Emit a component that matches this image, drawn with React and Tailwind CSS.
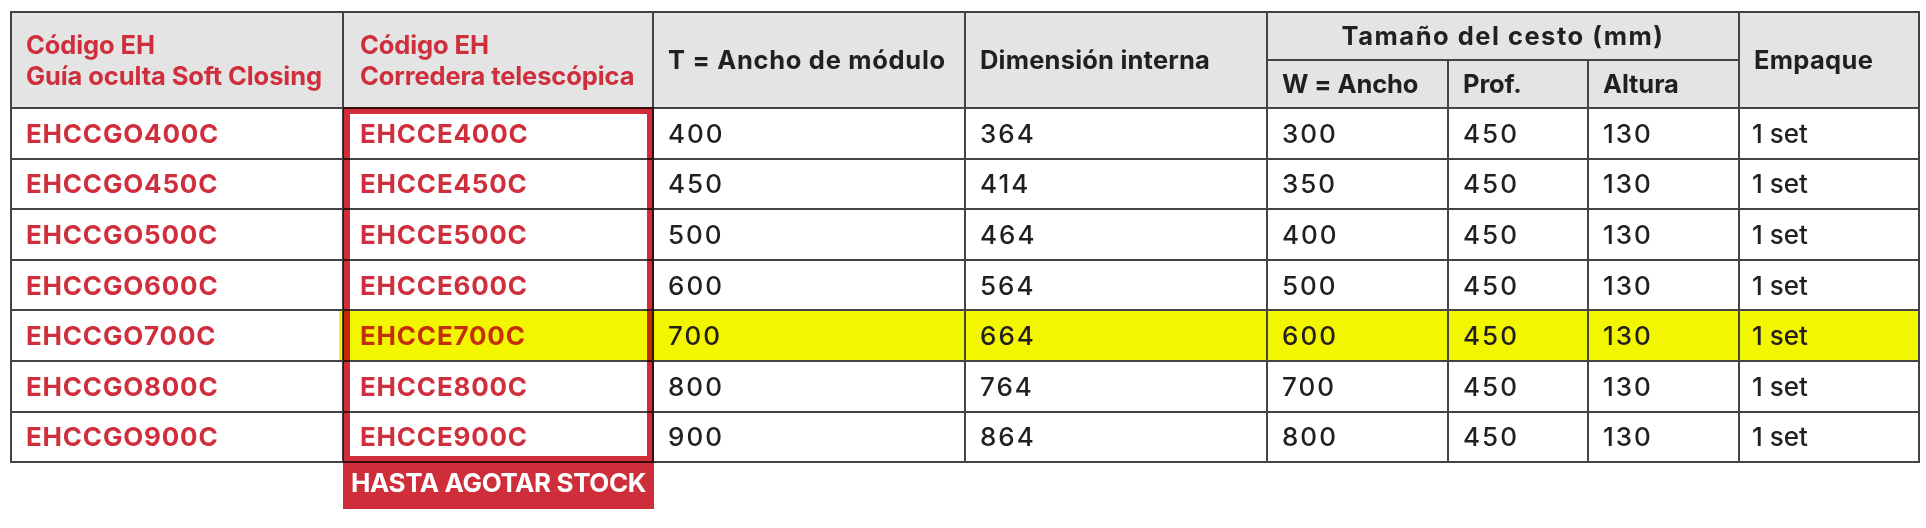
import React from "react";

const rows = [
  ["EHCCGO400C", "EHCCE400C", "400", "364", "300", "450", "130", "1 set"],
  ["EHCCGO450C", "EHCCE450C", "450", "414", "350", "450", "130", "1 set"],
  ["EHCCGO500C", "EHCCE500C", "500", "464", "400", "450", "130", "1 set"],
  ["EHCCGO600C", "EHCCE600C", "600", "564", "500", "450", "130", "1 set"],
  ["EHCCGO700C", "EHCCE700C", "700", "664", "600", "450", "130", "1 set"],
  ["EHCCGO800C", "EHCCE800C", "800", "764", "700", "450", "130", "1 set"],
  ["EHCCGO900C", "EHCCE900C", "900", "864", "800", "450", "130", "1 set"],
];

const cell = "border-2 border-[#444] px-[14px] align-middle";

const App = () => {
  return (
    <div className="min-h-screen bg-white font-['Inter',sans-serif] text-[#231f20]">
      <div className="relative pl-[10px] pt-[11px]">
        <table className="table-fixed border-collapse w-[1908px]">
          <colgroup>
            <col className="w-[332px]" />
            <col className="w-[310px]" />
            <col className="w-[312px]" />
            <col className="w-[302px]" />
            <col className="w-[181px]" />
            <col className="w-[140px]" />
            <col className="w-[151px]" />
            <col className="w-[180px]" />
          </colgroup>

          {/* Header */}
          <thead className="bg-[#e4e4e4] text-[25.5px] font-bold tracking-[-0.1px]">
            <tr className="h-[48px]">
              <th rowSpan={2} className={`${cell} text-left leading-[31px] text-[#cf2f3c]`}>
                Código EH
                <br />
                Guía oculta Soft Closing
              </th>
              <th rowSpan={2} className={`${cell} pl-[16px] text-left leading-[31px] text-[#cf2f3c]`}>
                Código EH
                <br />
                Corredera telescópica
              </th>
              <th rowSpan={2} className={`${cell} text-left tracking-[0.7px]`}>
                T = Ancho de módulo
              </th>
              <th rowSpan={2} className={`${cell} text-left tracking-[0.2px]`}>
                Dimensión interna
              </th>
              <th colSpan={3} className={`${cell} text-center tracking-[1.5px]`}>
                Tamaño del cesto (mm)
              </th>
              <th rowSpan={2} className={`${cell} text-left tracking-[0.3px]`}>
                Empaque
              </th>
            </tr>
            <tr className="h-[48px]">
              <th className={`${cell} text-left`}>W = Ancho</th>
              <th className={`${cell} text-left`}>Prof.</th>
              <th className={`${cell} text-left`}>Altura</th>
            </tr>
          </thead>

          {/* Body */}
          <tbody className="text-[26px] font-medium">
            {rows.map((r, i) => {
              const hl = i === 4;
              return (
                <tr key={r[0]} className="h-[50.6px]">
                  <td className={`${cell} bg-white font-bold tracking-[0.8px] text-[#cf2f3c]`}>{r[0]}</td>
                  <td
                    className={`${cell} pl-[16px] font-bold tracking-[0.8px] ${
                      hl
                        ? "bg-[#f2f700] text-[#c42e08] shadow-[-4px_0_0_#f2f700]"
                        : "bg-white text-[#cf2f3c]"
                    }`}
                  >
                    {r[1]}
                  </td>
                  {r.slice(2).map((v, j) => (
                    <td
                      key={j}
                      className={`${cell} ${hl ? "bg-[#f2f700]" : "bg-white"} ${
                        j === 5 ? "pl-[12px]" : "tracking-[2px]"
                      }`}
                    >
                      {v}
                    </td>
                  ))}
                </tr>
              );
            })}
          </tbody>
        </table>

        {/* Stock frame around the second column */}
        <div className="absolute left-[343px] top-[107px] flex h-[402px] w-[311px] flex-col mix-blend-multiply">
          <div className="flex-1 border-x-[7px] border-t-[7px] border-[#cd2e3a]" />
          <div className="flex h-[53px] items-center justify-center bg-[#cd2e3a] text-[26px] font-bold tracking-[-0.4px] text-white">
            HASTA AGOTAR STOCK
          </div>
        </div>
      </div>
    </div>
  );
};

export default App;
